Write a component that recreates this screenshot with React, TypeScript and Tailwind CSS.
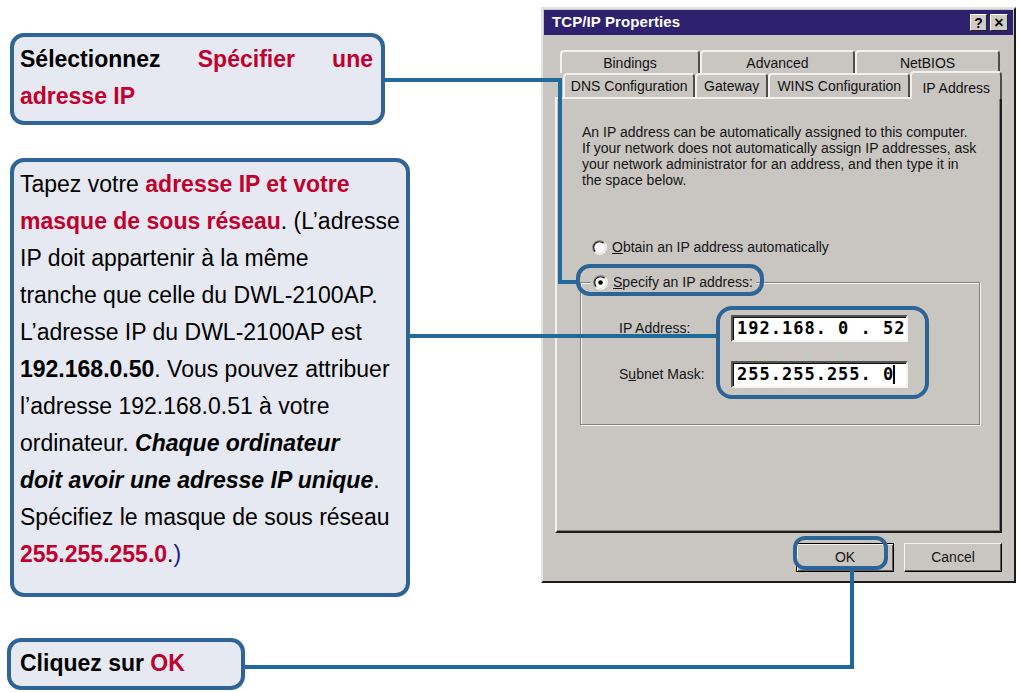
import React from "react";

const RED = "text-[#c1002e]";

function Radio({ checked }: { checked?: boolean }) {
  return (
    <svg width="15" height="15" viewBox="0 0 13 13" className="shrink-0">
      <circle cx="6.5" cy="6.5" r="5.5" fill="#ffffff" />
      <path d="M2.26 10.74 A6 6 0 0 1 10.74 2.26" stroke="#7d7b78" strokeWidth="1" fill="none" />
      <path d="M10.74 2.26 A6 6 0 0 1 2.26 10.74" stroke="#ffffff" strokeWidth="1" fill="none" />
      <path d="M2.96 10.04 A5 5 0 0 1 10.04 2.96" stroke="#101010" strokeWidth="1" fill="none" />
      <path d="M10.04 2.96 A5 5 0 0 1 2.96 10.04" stroke="#dcdad7" strokeWidth="1" fill="none" />
      {checked && <circle cx="6.5" cy="6.5" r="2" fill="#000000" />}
    </svg>
  );
}

function Tab({ label, w }: { label: string; w: string }) {
  return (
    <div
      className={`${w} h-full flex items-center justify-center border-t-2 border-l-2 border-r-2 border-t-[#f3f1ef] border-l-[#f3f1ef] border-r-[#4f4d4b] rounded-t-[4px] text-[14px] text-[#111] pt-[1px]`}
    >
      {label}
    </div>
  );
}

function Dialog() {
  return (
    <div className="mt-[7px] w-[475px] h-[576px] bg-[#c9c6c2] border-2 border-t-[#e4e2df] border-l-[#e4e2df] border-r-[#1c1c1c] border-b-[#1c1c1c] flex flex-col font-['Liberation_Sans',Arial,sans-serif]">
      {/* title bar */}
      <div className="mx-[1px] mt-[1px] h-[25px] bg-[#2d2170] flex items-center justify-between pl-[8px] pr-[5px]">
        <span className="text-white font-bold text-[15px] tracking-[0.1px]">TCP/IP Properties</span>
        <div className="flex gap-[3px]">
          <div className="w-[17px] h-[17px] bg-[#cfccc8] border border-t-white border-l-white border-r-[#222] border-b-[#222] flex items-center justify-center text-[14px] font-bold leading-none text-black">
            ?
          </div>
          <div className="w-[18px] h-[17px] bg-[#cfccc8] border border-t-white border-l-white border-r-[#222] border-b-[#222] flex items-center justify-center text-[16px] font-bold leading-none text-black">
            ×
          </div>
        </div>
      </div>

      <div className="px-[12px] pt-[15px] flex flex-col">
        {/* tab rows */}
        <div className="h-[23px] ml-[5px] flex">
          <Tab label="Bindings" w="w-[140px]" />
          <Tab label="Advanced" w="w-[155px]" />
          <Tab label="NetBIOS" w="w-[145px]" />
        </div>
        <div className="h-[24px] ml-[8px] flex items-end">
          <Tab label="DNS Configuration" w="w-[133px]" />
          <Tab label="Gateway" w="w-[73px]" />
          <Tab label="WINS Configuration" w="w-[143px]" />
          <div className="relative z-10 w-[92px] h-[28px] -mb-[2px] bg-[#c9c6c2] flex items-start justify-center pt-[5px] border-t-2 border-l-2 border-r-2 border-t-[#f3f1ef] border-l-[#f3f1ef] border-r-[#4f4d4b] rounded-t-[4px] text-[14px] text-[#111]">
            IP Address
          </div>
        </div>

        {/* panel */}
        <div className="h-[436px] border-2 border-t-[#f3f1ef] border-l-[#f3f1ef] border-r-[#1c1c1c] border-b-[#1c1c1c] shadow-[inset_-1px_-1px_0_#85827f] pl-[25px] pt-[25px] flex flex-col">
          <div className="text-[14px] leading-[16px] text-[#151515] whitespace-nowrap">
            An IP address can be automatically assigned to this computer.
            <br />
            If your network does not automatically assign IP addresses, ask
            <br />
            your network administrator for an address, and then type it in
            <br />
            the space below.
          </div>

          <div className="mt-[51px] pl-[10px] flex items-center gap-[5px] h-[16px] text-[14px] text-[#151515]">
            <Radio />
            <span>
              <span className="underline">O</span>btain an IP address automatically
            </span>
          </div>

          <div className="relative mt-[27px] -ml-[2px] w-[400px] h-[143px] border border-[#86837f] shadow-[1px_1px_0_#f6f4f2,inset_1px_1px_0_#f6f4f2]">
            <div className="absolute -top-[9px] left-[10px] bg-[#c9c6c2] pl-[2px] pr-[3px] h-[16px] flex items-center gap-[5px] text-[14px] text-[#151515]">
              <Radio checked />
              <span>
                <span className="underline">S</span>pecify an IP address:
              </span>
            </div>

            <div className="pt-[32px] pl-[38px] flex flex-col gap-[19px]">
              <div className="flex items-center">
                <span className="w-[112px] text-[14px] text-[#151515]">IP Address:</span>
                <div className="w-[177px] h-[27px] bg-white border-2 border-t-[#55534f] border-l-[#55534f] border-r-[#f7f5f3] border-b-[#f7f5f3] shadow-[inset_1px_1px_0_#111] flex items-center pl-[4px] font-['DejaVu_Sans_Mono',monospace] font-bold text-[17px] tracking-[1px] text-black whitespace-pre">
                  192.168. 0 . 52
                </div>
              </div>
              <div className="flex items-center">
                <span className="w-[112px] text-[14px] text-[#151515]">
                  S<span className="underline">u</span>bnet Mask:
                </span>
                <div className="w-[177px] h-[27px] bg-white border-2 border-t-[#55534f] border-l-[#55534f] border-r-[#f7f5f3] border-b-[#f7f5f3] shadow-[inset_1px_1px_0_#111] flex items-center pl-[4px] font-['DejaVu_Sans_Mono',monospace] font-bold text-[17px] tracking-[1px] text-black whitespace-pre">
                  255.255.255. 0<span className="inline-block w-[2px] h-[19px] bg-black ml-[-1px]" />
                </div>
              </div>
            </div>
          </div>
        </div>

        {/* buttons */}
        <div className="mt-[10px] flex justify-end gap-[10px]">
          <div className="w-[98px] h-[29px] border border-black bg-[#c9c6c2] shadow-[inset_1px_1px_0_#f6f4f2,inset_-1px_-1px_0_#5e5c59] flex items-center justify-center text-[14px] text-[#151515]">
            OK
          </div>
          <div className="w-[98px] h-[29px] border border-t-[#f6f4f2] border-l-[#f6f4f2] border-r-black border-b-black bg-[#c9c6c2] shadow-[inset_-1px_-1px_0_#5e5c59] flex items-center justify-center text-[14px] text-[#151515]">
            Cancel
          </div>
        </div>
      </div>
    </div>
  );
}

export default function App() {
  const box =
    "rounded-[14px] border-4 border-[#2f6494] bg-[#e6e9f1] text-[23px] leading-[37px] text-black";
  return (
    <div className="relative w-[1020px] h-[692px] overflow-hidden bg-white font-['Liberation_Sans',Arial,sans-serif]">
      <div className="flex">
        {/* left column */}
        <div className="w-[541px] pl-[10px] pt-[33px] flex flex-col">
          <div className={`${box} w-[375px] h-[92px] pl-[6px] pr-[8px] pt-[4px] font-bold`}>
            <div className="flex justify-between">
              <span>Sélectionnez</span>
              <span className={RED}>Spécifier</span>
              <span className={RED}>une</span>
            </div>
            <div className={RED}>adresse IP</div>
          </div>

          <div className={`${box} mt-[33px] w-[400px] h-[439px] px-[6px] pt-[4px] whitespace-nowrap`}>
            Tapez votre <span className={`${RED} font-bold`}>adresse IP et votre</span>
            <br />
            <span className={`${RED} font-bold`}>masque de sous réseau</span>. (L’adresse
            <br />
            IP doit appartenir à la même
            <br />
            tranche que celle du DWL-2100AP.
            <br />
            L’adresse IP du DWL-2100AP est
            <br />
            <span className="font-bold">192.168.0.50</span>. Vous pouvez attribuer
            <br />
            l’adresse 192.168.0.51 à votre
            <br />
            ordinateur. <span className="font-bold italic">Chaque ordinateur</span>
            <br />
            <span className="font-bold italic">doit avoir une adresse IP unique</span>.
            <br />
            Spécifiez le masque de sous réseau
            <br />
            <span className={`${RED} font-bold`}>255.255.255.0</span>.<span className="text-[#1c1c8a]">)</span>
          </div>

          <div className={`${box} mt-[41px] -ml-[3px] w-[238px] h-[52px] px-[9px] pt-[3px] font-bold`}>
            Cliquez sur <span className={RED}>OK</span>
          </div>
        </div>

        <Dialog />
      </div>

      {/* connectors and highlights over the content */}
      <svg className="absolute inset-0 pointer-events-none" width="1020" height="692" viewBox="0 0 1020 692">
        <g fill="none" stroke="#1f699d" strokeWidth="4">
          <path d="M385 80 H560 V282 H578" />
          <path d="M410 336 H718" />
          <path d="M245 667 H852 V568" />
        </g>
        <g fill="none" stroke="#2c6495" strokeWidth="4">
          <rect x="578" y="266" width="184" height="28" rx="12" />
          <rect x="718" y="308" width="209" height="89" rx="14" />
          <rect x="795" y="538" width="91" height="30" rx="10" />
        </g>
      </svg>
    </div>
  );
}
